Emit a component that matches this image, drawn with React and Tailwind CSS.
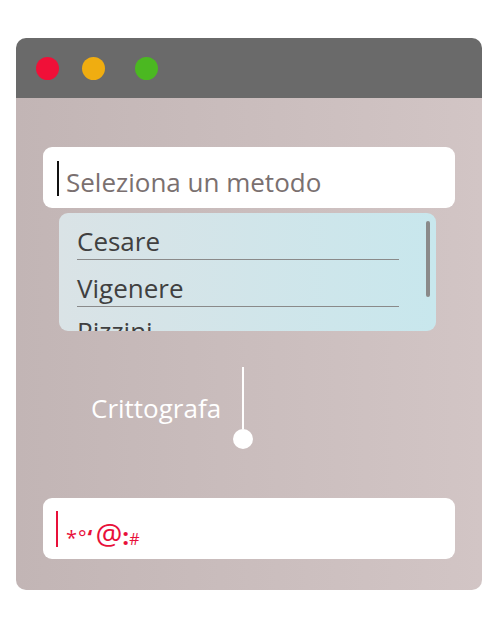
const items = ["Cesare", "Vigenere", "Pizzini"];

const App = () => {
  return (
    <div className="w-[497px] h-[620px] bg-white pt-[38px] pl-4" style={{ fontFamily: '"Open Sans", "Lato", sans-serif' }}>
      <div className="w-[466px] h-[552px] rounded-[10px] overflow-hidden flex flex-col">

        {/* ===== TITLE BAR ===== */}
        <div className="h-[60px] bg-[#6a6a6a] flex items-center pl-[20px] gap-[23px]">
          <span className="w-[23px] h-[23px] rounded-full bg-[#f01038]" />
          <span className="w-[23px] h-[23px] rounded-full bg-[#f0ad10]" />
          <span className="w-[23px] h-[23px] rounded-full bg-[#4bb821] ml-[7px]" />
        </div>

        {/* ===== BODY ===== */}
        <div className="flex-1 bg-gradient-to-r from-[#c2b5b5] to-[#d2c5c5] px-[27px] pt-[49px] flex flex-col">

          <div className="h-[61px] bg-white rounded-[9px] flex items-center pl-[14px]">
            <span className="w-[2px] h-[35px] bg-[#111] mt-[2px]" />
            <span className="ml-[7px] text-[26px] leading-none text-[#7a7070] mt-[8px]">Seleziona un metodo</span>
          </div>

          <div className="ml-4 mt-[5px] w-[377px] h-[118px] shrink-0 rounded-[9px] bg-gradient-to-r from-[#dae3e6] to-[#c8e7ed] relative overflow-hidden">
            <div className="pl-[18px] pr-[37px]">
              {items.map((item, i) => (
                <div
                  key={item}
                  className={i === 2 ? "h-[47px] -mt-[5px] flex items-end pb-[5px]" : "h-[47px] border-b border-[#8a8a8a] flex items-end pb-[5px]"}
                >
                  <span className="text-[26px] leading-none text-[#404040]">{item}</span>
                </div>
              ))}
            </div>
            <span className="absolute right-[6px] top-[8px] w-[4px] h-[76px] rounded-full bg-[#8a8a8a]" />
          </div>

          <div className="flex items-center mt-[36px] ml-[48px]">
            <span className="text-[26px] text-white w-[142px]">Crittografa</span>
            <div className="flex flex-col items-center w-[20px]">
              <span className="w-[2px] h-[62px] bg-white" />
              <span className="w-[20px] h-[20px] rounded-full bg-white" />
            </div>
          </div>

          <div className="h-[61px] bg-white rounded-[9px] flex items-center pl-[13px] mt-[49px]">
            <span className="w-[2px] h-[36px] bg-[#e8103a]" />
            <span className="ml-[8px] text-[#e8103a] flex items-baseline mt-[10px] leading-none">
              <span className="text-[20px]">*</span>
              <span className="text-[20px] ml-[1px]">°</span>
              <span className="text-[22px] ml-[1px] font-bold">‘</span>
              <span className="text-[30px] ml-[3px]">@</span>
              <span className="text-[24px] font-bold">:</span>
              <span className="text-[16px]">#</span>
            </span>
          </div>

        </div>
      </div>
    </div>
  );
};

export default App;
